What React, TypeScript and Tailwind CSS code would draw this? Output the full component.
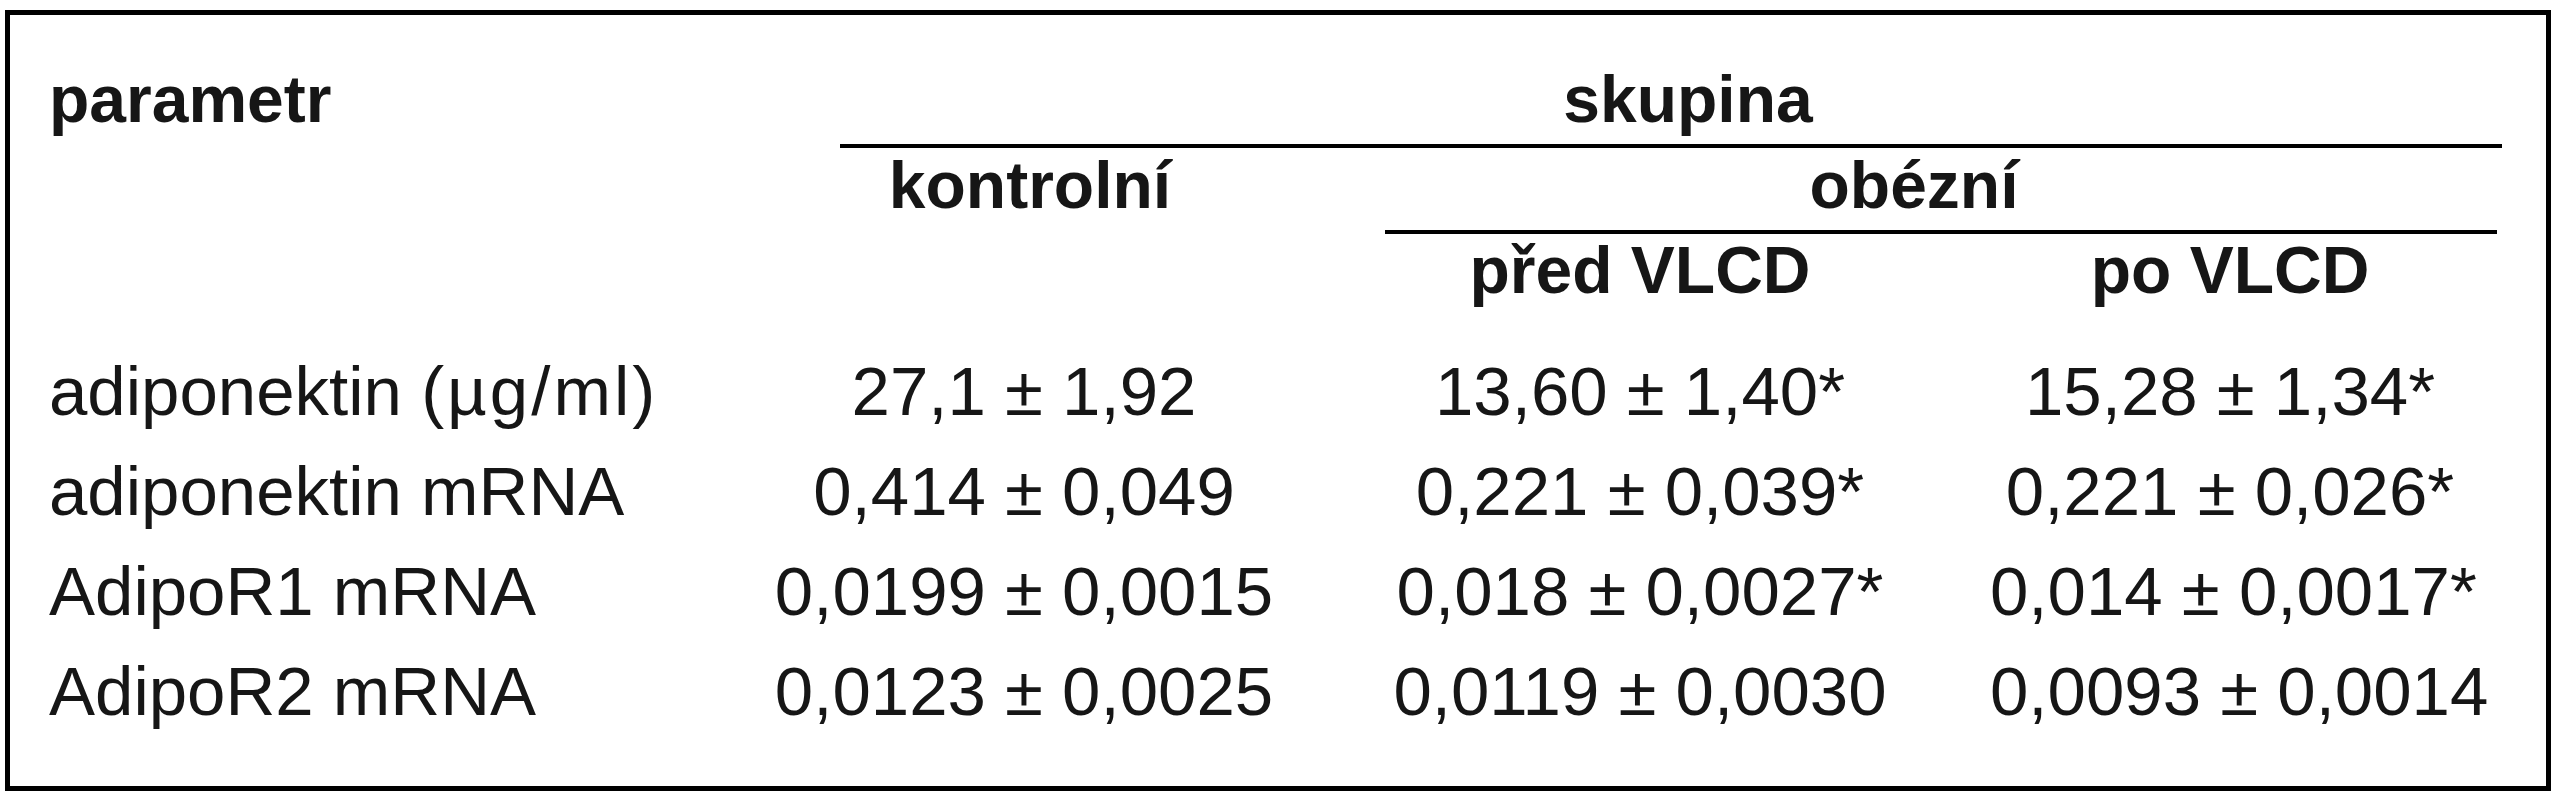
import React from 'react';

type Row = {
  label: React.ReactNode;
  key: string;
  control: string;
  before: string;
  after: string;
};

const rows: Row[] = [
  {
    key: 'adiponektin',
    label: (
      <>
        adiponektin <span className="tracking-[3px]">(µg/ml)</span>
      </>
    ),
    control: '27,1 ± 1,92',
    before: '13,60 ± 1,40*',
    after: '15,28 ± 1,34*',
  },
  { key: 'adiponektin-mrna', label: 'adiponektin mRNA', control: '0,414 ± 0,049', before: '0,221 ± 0,039*', after: '0,221 ± 0,026*' },
  { key: 'adipor1', label: 'AdipoR1 mRNA', control: '0,0199 ± 0,0015', before: '0,018 ± 0,0027*', after: '0,014 ± 0,0017*' },
  { key: 'adipor2', label: 'AdipoR2 mRNA', control: '0,0123 ± 0,0025', before: '0,0119 ± 0,0030', after: '0,0093 ± 0,0014' },
];

const head = 'whitespace-nowrap text-[66px] leading-[66px] font-bold';

const App: React.FC = () => {
  return (
    <div className="w-[2559px] h-[800px] bg-white pt-[10px] pl-[5px] font-['Liberation_Sans',Arial,sans-serif] text-[#161616]">
      <div className="w-[2546px] h-[781px] border-[5px] border-black pl-[39px] pt-[51px]">
        {/* Hlavička tabulky */}
        <div className="grid grid-cols-[721px_520px_700px_512px]">
          <div className={head}>parametr</div>
          <div className={`${head} col-span-3 text-center pl-[104px]`}>skupina</div>

          <div className="col-start-2 col-span-3 mt-[12px] ml-[70px] h-[4px] bg-black" />

          <div className={`${head} col-start-2 mt-[4px] text-center`}>kontrolní</div>
          <div className={`${head} col-span-2 mt-[4px] text-center pl-[36px]`}>obézní</div>

          <div className="col-start-3 col-span-2 mt-[12px] ml-[95px] mr-[5px] h-[4px] bg-black" />

          <div className={`${head} col-start-3 mt-[3px] text-center`}>před VLCD</div>
          <div className={`${head} mt-[3px] text-center pr-[32px]`}>po VLCD</div>
        </div>

        {/* Hodnoty */}
        <div className="grid grid-cols-[721px_520px_700px_512px] mt-[39px] text-[69px] leading-[100px]">
          {rows.map((row) => (
            <React.Fragment key={row.key}>
              <div className="h-[100px] whitespace-nowrap">{row.label}</div>
              <div className="h-[100px] whitespace-nowrap text-center pr-[12px]">{row.control}</div>
              <div className="h-[100px] whitespace-nowrap text-center">{row.before}</div>
              <div className="h-[100px] whitespace-nowrap text-center pr-[32px]">{row.after}</div>
            </React.Fragment>
          ))}
        </div>
      </div>
    </div>
  );
};

export default App;
